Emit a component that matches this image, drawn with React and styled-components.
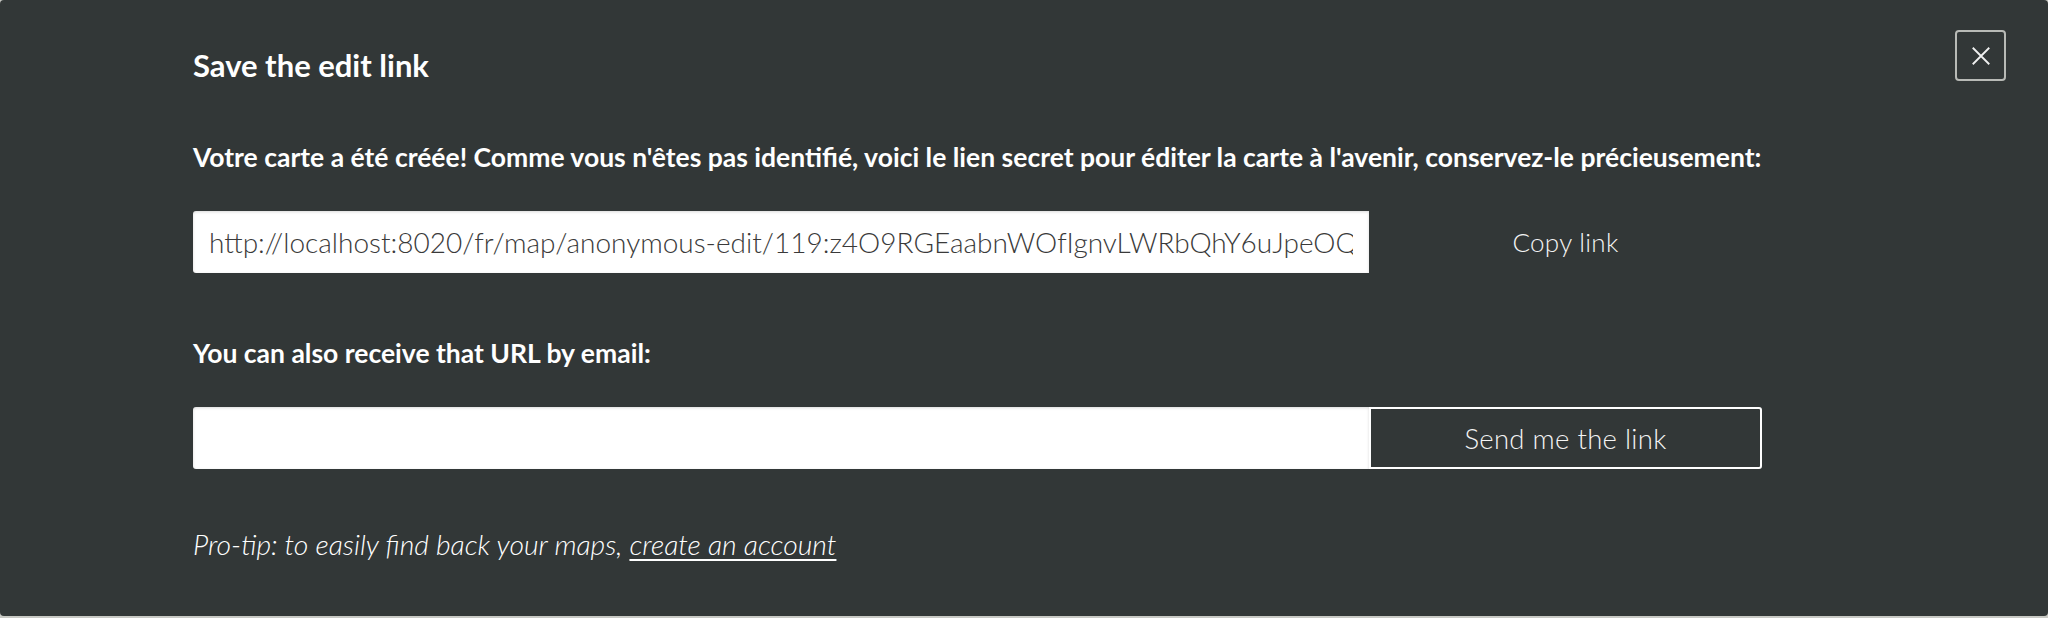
import styled, { createGlobalStyle } from "styled-components";

const GlobalStyle = createGlobalStyle`
    html, body {
        margin: 0;
        padding: 0;
        background: #c8c9c4;
    }
    body {
        font-family: Lato, "Open Sans", sans-serif;
        color: #fff;
    }
    * {
        box-sizing: border-box;
    }
`;

const Panel = styled.div`
    position: relative;
    height: 616px;
    background-color: #323737;
    border-radius: 4px;
    padding: 46px 0 0 193px;
`;

const CloseButton = styled.button`
    position: absolute;
    top: 30px;
    right: 42px;
    width: 51px;
    height: 51px;
    background: transparent;
    border: 2px solid #b8bab6;
    border-radius: 4px;
    display: flex;
    align-items: center;
    justify-content: center;
    padding: 0;
    cursor: pointer;

    svg {
        width: 22px;
        height: 22px;
    }
`;

const Title = styled.h3`
    margin: 0;
    font-size: 31px;
    font-weight: 700;
    line-height: 38px;
`;

const Label = styled.p`
    margin: 0;
    font-size: 26.5px;
    font-weight: 700;
    line-height: 32px;
    white-space: nowrap;
    margin-top: ${props => props.top}px;
`;

const Row = styled.div`
    display: flex;
    width: 1569px;
    height: 62px;
    margin-top: ${props => props.top}px;
`;

const Field = styled.input`
    width: 1176px;
    height: 100%;
    border: none;
    border-radius: 3px 0 0 3px;
    background: #fff;
    box-shadow: inset 0 1px 3px rgba(0, 0, 0, 0.15);
    padding: 0 16px;
    font-family: Lato, "Open Sans", sans-serif;
    font-size: 28px;
    font-weight: 300;
    color: #3a3a3a;
    outline: none;
`;

const ActionButton = styled.button`
    flex: 1;
    height: 100%;
    background: transparent;
    color: #f4f4f4;
    font-family: Lato, "Open Sans", sans-serif;
    font-size: ${props => (props.outlined ? 27.5 : 26)}px;
    font-weight: 300;
    letter-spacing: 0.3px;
    border: ${props => (props.outlined ? "2px solid #fff" : "none")};
    border-radius: ${props => (props.outlined ? "0 3px 3px 0" : "0")};
    cursor: pointer;
`;

const Tip = styled.p`
    margin: 58px 0 0;
    font-size: 28.3px;
    font-weight: 300;
    font-style: italic;
    color: #fff;

    a {
        color: #fff;
        text-decoration: underline;
        text-underline-offset: 4px;
    }
`;

export default function App() {
    const url = "http://localhost:8020/fr/map/anonymous-edit/119:z4O9RGEaabnWOfIgnvLWRbQhY6uJpeOQl";
    return (
        <>
            <GlobalStyle />
            <Panel>
                <CloseButton aria-label="Close">
                    <svg viewBox="0 0 24 24" fill="none" stroke="#f0f0f0" strokeWidth="2">
                        <path d="M3 3l18 18M21 3L3 21" />
                    </svg>
                </CloseButton>
                <Title>Save the edit link</Title>
                <Label top={57}>
                    Votre carte a été créée! Comme vous n'êtes pas identifié, voici le lien secret pour éditer la carte à l'avenir, conservez-le précieusement:
                </Label>
                <Row top={38}>
                    <Field type="text" value={url} readOnly />
                    <ActionButton>Copy link</ActionButton>
                </Row>
                <Label top={64}>You can also receive that URL by email:</Label>
                <Row top={38}>
                    <Field type="email" />
                    <ActionButton outlined>Send me the link</ActionButton>
                </Row>
                <Tip>
                    Pro-tip: to easily find back your maps, <a href="#">create an account</a>
                </Tip>
            </Panel>
        </>
    );
}
